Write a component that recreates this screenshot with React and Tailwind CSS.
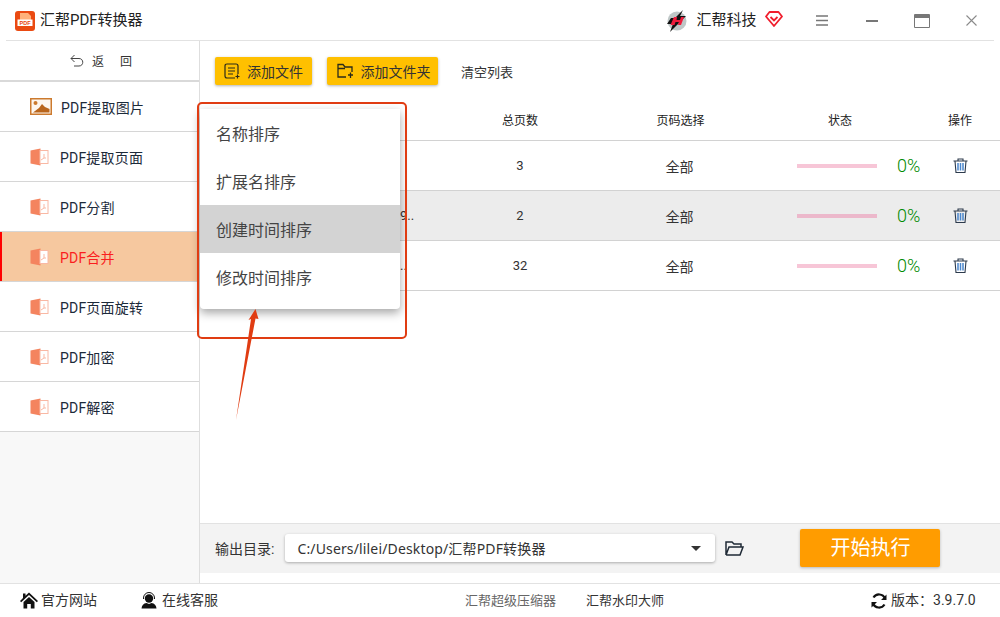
import React from 'react';

const FONT = "font-['Roboto','Noto_Sans_CJK_SC',sans-serif]";

const navItems = [
  { label: 'PDF提取图片', image: true },
  { label: 'PDF提取页面' },
  { label: 'PDF分割' },
  { label: 'PDF合并', active: true },
  { label: 'PDF页面旋转' },
  { label: 'PDF加密' },
  { label: 'PDF解密' },
];

const rows = [
  { pages: 3, name: '', bg: '' },
  { pages: 2, name: '9..', bg: 'bg-[#ececec]', bar: 'bg-[#ecb8cb]' },
  { pages: 32, name: '..', bg: '' },
];

const menu = ['名称排序', '扩展名排序', '创建时间排序', '修改时间排序'];

const PdfIcon = () => (
  <svg width="19" height="18" viewBox="0 0 19 18" className="shrink-0">
    <path d="M0.5 2.5 L10.5 0.5 V17.5 L0.5 15.5 Z" fill="#f4845f" />
    <rect x="10" y="2.5" width="8" height="13" fill="#fff" stroke="#f9b8a4" strokeWidth="1" />
    <path d="M14 6 V10 L11 12 M14 10 H16" fill="none" stroke="#f9b8a4" strokeWidth="1" />
  </svg>
);

const ImageIcon = () => (
  <svg width="22" height="17" viewBox="0 0 22 17" className="shrink-0">
    <rect x="0.75" y="0.75" width="20.5" height="15.5" fill="#fdf6ee" stroke="#cc7a2e" strokeWidth="1.5" />
    <circle cx="5.5" cy="5" r="2" fill="#cc7a2e" />
    <path d="M3 14.5 L9 10 L12 6 L15 9 L19.5 11 V14.5 Z" fill="#b9651b" />
  </svg>
);

const Trash = () => (
  <svg width="15" height="15" viewBox="0 0 15 15" className="block">
    <path d="M0.5 3 H14.5 M5 3 V1 H10 V3" fill="none" stroke="#2c3a4c" strokeWidth="1.1" />
    <path d="M2 3 L3 14.5 H12 L13 3" fill="none" stroke="#2c3a4c" strokeWidth="1.1" />
    <path d="M5 5 V12.5 M7.5 5 V12.5 M10 5 V12.5" stroke="#4a86cc" strokeWidth="1.5" />
  </svg>
);

const Row = ({ row }) => (
  <div className={`flex h-[50px] items-center border-b border-[#d2d2d2] text-[13px] text-[#333] ${row.bg}`}>
    <div className="w-[205px] pl-[200px] text-[13px] whitespace-nowrap">{row.name}</div>
    <div className="w-[230px] text-center">{row.pages}</div>
    <div className="w-[89px] pt-[3px] text-center text-[14px]">全部</div>
    <div className="ml-[73px] flex w-[124px] items-center">
      <div className={`h-1 w-20 ${row.bar || 'bg-[#f7c6d7]'}`} />
      <span className="ml-5 text-[18px] font-light text-[#008a00]">0%</span>
    </div>
    <div className="ml-[27px] flex w-[24px] justify-center"><Trash /></div>
  </div>
);

export default function App() {
  return (
    <div className={`relative flex h-[617px] w-[1000px] flex-col overflow-hidden bg-white ${FONT}`}>
      {/* Title bar */}
      <div className="mx-1.5 flex h-[41px] shrink-0 items-center border-b border-[#e2e2e2] pt-[1px]">
        <svg width="20" height="20" viewBox="0 0 20 20" className="ml-[9px]">
          <rect width="20" height="20" rx="3" fill="#ea4a12" />
          <path d="M5 2 H13 L16 5 V9 H5 Z" fill="#ffb27a" />
          <rect x="2.5" y="8.5" width="15" height="6.5" fill="#fff" />
          <text x="10" y="14" textAnchor="middle" fontSize="5.5" fontWeight="700" fill="#e8400c" fontFamily="Liberation Sans">PDF</text>
        </svg>
        <span className="ml-[5px] text-[15px] text-[#222]">汇帮PDF转换器</span>
        <svg width="22" height="24" viewBox="0 0 22 24" className="ml-[523px]">
          <circle cx="11" cy="12" r="9.5" fill="#bfc7c7" />
          <path d="M17 1 L14 7 H20 L4 23 L7 15 H1 L5 9 H9 Z" fill="#111" />
          <path d="M8 8 H11 L10.5 11 H14 L15 8 H18 L15 16 H12 L12.8 13 H9.5 L8.5 16 H4.5 Z" fill="#ee1c3c" />
        </svg>
        <span className="ml-[9px] text-[15px] text-[#222]">汇帮科技</span>
        <svg width="18" height="16" viewBox="0 0 18 16" className="ml-2 -mt-1">
          <path d="M4.5 1 H13.5 L17 5.5 L9 15 L1 5.5 Z" fill="none" stroke="#f01d2c" strokeWidth="1.8" strokeLinejoin="round" />
          <path d="M5.5 6 L9 9.5 L12.5 6" fill="none" stroke="#f01d2c" strokeWidth="1.8" />
        </svg>
        <svg width="12" height="11" viewBox="0 0 12 11" className="ml-[33px]">
          <path d="M0 1 H12 M0 5.5 H12 M0 10 H12" stroke="#777" strokeWidth="1.5" />
        </svg>
        <div className="ml-[38px] h-0.5 w-3 bg-[#777]" />
        <div className="ml-[36px] h-[14px] w-4 rounded-[1px] border-[1.5px] border-[#777] border-t-[4px]" />
        <svg width="11" height="11" viewBox="0 0 11 11" className="ml-[36px]">
          <path d="M0.5 0.5 L10.5 10.5 M10.5 0.5 L0.5 10.5" stroke="#8a8a8a" strokeWidth="1.1" />
        </svg>
      </div>

      {/* Body */}
      <div className="flex min-h-0 flex-1">
        <aside className="flex w-[200px] shrink-0 flex-col border-r border-[#dedede] bg-[#f8f8f8]">
          <div className="flex h-[41px] shrink-0 items-center justify-center border-b-2 border-[#d9d9d9] bg-white pl-[3px] text-[12px] text-[#333]">
            <svg width="14" height="13" viewBox="0 0 14 13">
              <path d="M4.5 1 L1 4.5 L4.5 8 M1 4.5 H9 C14 4.5 14 12 9 12 H4" fill="none" stroke="#444" strokeWidth="1" />
            </svg>
            <span className="ml-2 pt-[2px]">返</span>
            <span className="ml-4 pt-[2px]">回</span>
          </div>
          {navItems.map((item) => (
            <div
              key={item.label}
              className={`flex h-[50px] shrink-0 items-center border-b border-[#d6d6d6] text-[14px] tracking-[0.2px] ${
                item.image ? 'gap-[9px] pl-[30px]' : 'gap-[11px] pl-[30px]'
              } ${item.active ? 'bg-[#f6c89f] text-[#fa1e1e] shadow-[inset_2px_0_0_#ff0000]' : 'bg-white text-[#1c2a3a]'}`}
            >
              {item.image ? <ImageIcon /> : <PdfIcon />}
              <span className="pt-[3px]">{item.label}</span>
            </div>
          ))}
        </aside>

        <main className="flex min-w-0 flex-1 flex-col">
          {/* Toolbar */}
          <div className="flex h-[59px] shrink-0 items-start gap-[15px] pl-[15px] pt-[16px]">
            <button className="flex h-7 w-[97px] items-center justify-center gap-[7px] rounded-[2px] bg-[#ffc000] text-[14px] text-[#333] shadow-[0_1px_3px_rgba(0,0,0,0.3)]">
              <svg width="16" height="16" viewBox="0 0 16 16">
                <path d="M11 15 H3 Q1 15 1 13 V3 Q1 1 3 1 H12 Q14 1 14 3 V11 M4 5 H11 M4 8 H11 M4 11 H9 M11.5 13.5 H15.5 M13.5 11.5 V15.5" fill="none" stroke="#2b2b1a" strokeWidth="1.2" />
              </svg>
              <span className="pt-[2px]">添加文件</span>
            </button>
            <button className="flex h-7 w-[111px] items-center justify-center gap-[7px] rounded-[2px] bg-[#ffc000] pl-[2px] text-[14px] text-[#333] shadow-[0_1px_3px_rgba(0,0,0,0.3)]">
              <svg width="17" height="16" viewBox="0 0 17 16">
                <path d="M9 14 H1 V1.5 H6 L8 4 H15 V9 M1 5.5 H8 M11 12 H16 M13.5 9.5 V15" fill="none" stroke="#2b2b1a" strokeWidth="1.3" />
              </svg>
              <span className="pt-[2px]">添加文件夹</span>
            </button>
            <span className="ml-[8px] flex h-7 items-center pt-[3px] text-[13px] text-[#333]">清空列表</span>
          </div>

          {/* Table */}
          <div className="flex h-[41px] shrink-0 items-center border-b border-[#d2d2d2] pt-[2px] text-[12px] text-[#222]">
            <div className="w-[205px]" />
            <div className="w-[230px] text-center">总页数</div>
            <div className="w-[91px] text-center">页码选择</div>
            <div className="ml-[71px] w-[124px] pl-[31px]">状态</div>
            <div className="ml-[27px] w-[24px] text-center whitespace-nowrap">操作</div>
          </div>
          {rows.map((row) => <Row key={row.pages} row={row} />)}

          <div className="flex-1" />

          {/* Output bar */}
          <div className="flex h-[50px] shrink-0 items-center border-t border-[#e2e2e2] bg-[#f3f3f3] pb-[1px] pl-[15px]">
            <span className="pt-[2px] text-[14px] text-[#333]">输出目录:</span>
            <div className="ml-[11px] flex h-7 w-[430px] items-center justify-between rounded-[3px] bg-white pl-[12px] pr-[14px] text-[14px] text-[#333] shadow-[0_1px_3px_rgba(0,0,0,0.3)]">
              <span className="pt-[1px] font-['Noto_Sans','Noto_Sans_CJK_SC',sans-serif] tracking-[0.15px]">C:/Users/lilei/Desktop/汇帮PDF转换器</span>
              <span className="h-0 w-0 border-x-[5px] border-t-[5px] border-x-transparent border-t-[#333]" />
            </div>
            <svg width="19" height="15" viewBox="0 0 19 15" className="ml-[10px]">
              <path d="M1 14 V1 H7 L9 3 H16 V6 M1 14 H15 L18 6 H4 L1 14" fill="none" stroke="#1f2a36" strokeWidth="1.5" />
            </svg>
            <button className="ml-[56px] flex h-[38px] w-[140px] items-center justify-center rounded-[2px] bg-[#ff9c00] text-[20px] text-white shadow-[0_1px_3px_rgba(0,0,0,0.25)]">
              开始执行
            </button>
          </div>
          <div className="h-[10px] shrink-0" />
        </main>
      </div>

      {/* Footer */}
      <footer className="flex h-[34px] shrink-0 items-center border-t border-[#e2e2e2] text-[14px] text-[#333]">
        <svg width="18" height="17" viewBox="0 0 18 17" className="ml-[20px]">
          <path d="M9 0.5 L18 9 L16.8 10.2 L9 3 L1.2 10.2 L0 9 L3 6 V1.5 H5.5 V3.8 Z M3.5 10 L9 5 L14.5 10 V16.5 H10.8 V12 H7.2 V16.5 H3.5 Z" fill="#111" />
        </svg>
        <span className="ml-[3px]">官方网站</span>
        <svg width="16" height="17" viewBox="0 0 16 17" className="ml-[44px]">
          <circle cx="8" cy="6.5" r="4.2" fill="#111" />
          <path d="M2.5 7 V6 A5.5 5.5 0 0 1 13.5 6 V7" fill="none" stroke="#111" strokeWidth="1" />
          <path d="M0.5 16.5 Q1 11.5 5.5 11 L8 12 L10.5 11 Q15 11.5 15.5 16.5 Z" fill="#111" />
        </svg>
        <span className="ml-[5px]">在线客服</span>
        <span className="ml-[247px] text-[13px] text-[#666]">汇帮超级压缩器</span>
        <span className="ml-[30px] text-[13px]">汇帮水印大师</span>
        <svg width="16" height="16" viewBox="0 0 16 16" className="ml-[207px]">
          <path d="M14 5.5 A6.5 6.5 0 0 0 2.5 4.5 M2 10.5 A6.5 6.5 0 0 0 13.5 11.5" fill="none" stroke="#111" strokeWidth="2.2" />
          <path d="M15.5 1.5 V7 H10 Z M0.5 14.5 V9 H6 Z" fill="#111" />
        </svg>
        <span className="ml-1">版本：</span>
        <span>3.9.7.0</span>
      </footer>

      {/* Sort menu popup */}
      <div className="absolute left-[200px] top-[109px] flex h-[200px] w-[200px] flex-col rounded-b-[4px] bg-white text-[16px] text-[#444] shadow-[0_4px_10px_rgba(0,0,0,0.35)]">
        {menu.map((m, i) => (
          <div key={m} className={`flex h-12 shrink-0 items-center pl-4 pt-[4px] ${i === 2 ? 'bg-[#d3d3d3]' : ''}`}>{m}</div>
        ))}
      </div>

      {/* Annotation: red box and arrow */}
      <div className="pointer-events-none absolute left-[197px] top-[102px] h-[237px] w-[210px] rounded-[5px] border-2 border-[#e03c12]" />
      <svg width="30" height="115" viewBox="0 0 30 115" className="pointer-events-none absolute left-[230px] top-[306px]">
        <path d="M6 114 L21 13 L18.5 14 L25.5 3 L28.5 13 L25.5 12.5 Z" fill="#e03c12" />
      </svg>
    </div>
  );
}
